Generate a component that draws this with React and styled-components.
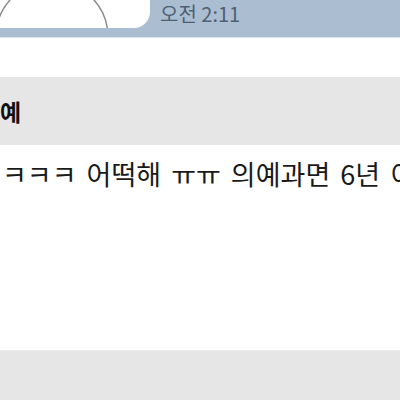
import React from "react";
import styled, { createGlobalStyle } from "styled-components";

const GlobalStyle = createGlobalStyle`
  html, body {
    margin: 0;
    padding: 0;
    background: #ffffff;
    overflow: hidden;
  }
  body {
    font-family: "Noto Sans CJK KR", "Noto Sans", sans-serif;
  }
`;

const Page = styled.div`
  width: 400px;
  height: 400px;
  display: flex;
  flex-direction: column;
  overflow: hidden;
`;

const TopBar = styled.div`
  height: 37px;
  flex: none;
  background: #aabdd1;
  border-bottom: 1px solid #dfe5ec;
  display: flex;
  align-items: flex-start;
`;

const Bubble = styled.div`
  width: 150px;
  height: 28px;
  background: #ffffff;
  border-bottom-right-radius: 16px;
  overflow: hidden;
  flex: none;
`;

const Time = styled.span`
  margin-left: 10px;
  font-size: 20px;
  line-height: 28px;
  color: #4f6073;
`;

const Spacer = styled.div`
  height: ${({ h }) => h}px;
  flex: none;
  background: ${({ bg }) => bg};
`;

const Header = styled.div`
  height: 68px;
  flex: none;
  background: #e6e6e6;
  display: flex;
  align-items: center;
`;

const Title = styled.span`
  font-size: 23px;
  font-weight: 700;
  color: #111111;
`;

const Body = styled.div`
  height: 205px;
  flex: none;
  background: #ffffff;
  padding: 10px 0 0 2px;
  box-sizing: border-box;
  white-space: nowrap;
  overflow: hidden;
`;

const Message = styled.p`
  margin: 0;
  font-size: 27px;
  line-height: 38px;
  word-spacing: 4px;
  color: #1a1a1a;
`;

const Footer = styled.div`
  flex: 1;
  background: #e6e6e6;
  border-top: 1px solid #ededed;
`;

export default function App() {
  return (
    <Page>
      <GlobalStyle />
      <TopBar>
        <Bubble>
          <svg width="150" height="28" viewBox="0 0 150 28">
            <circle cx="52" cy="37" r="56" fill="none" stroke="#8c8c8c" strokeWidth="1.5" />
          </svg>
        </Bubble>
        <Time>오전 2:11</Time>
      </TopBar>
      <Spacer h={39} bg="#ffffff" />
      <Header>
        <Title>예</Title>
      </Header>
      <Body>
        <Message>ㅋㅋㅋ 어떡해 ㅠㅠ 의예과면 6년 이</Message>
      </Body>
      <Footer />
    </Page>
  );
}
